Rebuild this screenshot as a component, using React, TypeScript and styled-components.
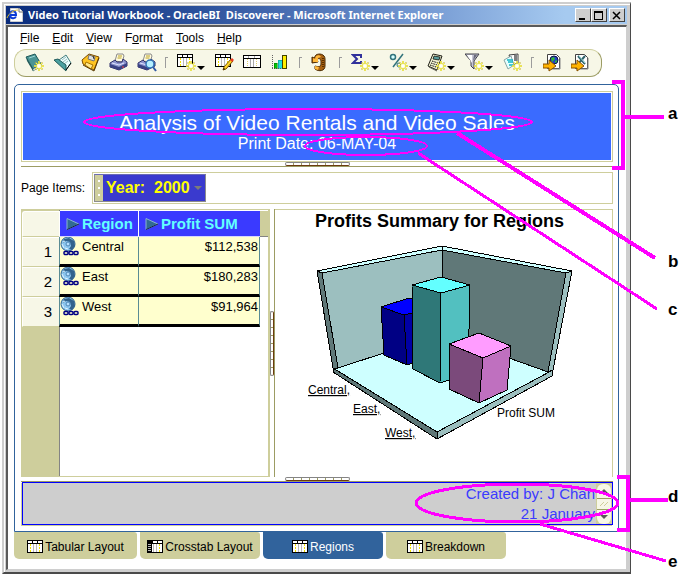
import React from "react";
import styled, { createGlobalStyle, css } from "styled-components";

const sand = "#cece9c";
const olive = "#9c9c63";
const cream = "#f7f7e7";
const steel = "#31639c";
const magenta = "#ff00ff";

const GlobalStyle = createGlobalStyle`
  *, *::before, *::after { box-sizing: border-box; }
  body { margin: 0; background: #fff; color: #000; font: 12px/16px "Liberation Sans", Arial, sans-serif; }
  button, select { font: inherit; color: inherit; margin: 0; padding: 0; border: 0; background: none; border-radius: 0; }
  svg { display: block; flex: none; }
`;

const Page = styled.div`
  position: relative;
  display: flex;
  min-height: 100vh;
  padding: 2px 59px 2px 2px;
`;

const Frame = styled.div`
  flex: 1;
  min-width: 0;
  display: flex;
  flex-direction: column;
  padding: 2px 3px 2px 2px;
  background: #cecece;
  border: 2px solid #cecece;
  border-right: 1px solid #4a4a4a;
  border-bottom: 2px solid #4a4a4a;
  box-shadow: inset 1px 1px 0 #fff;
`;

const TitleBar = styled.header`
  display: flex;
  align-items: center;
  height: 18px;
  padding-right: 2px;
  gap: 5px;
  color: #fff;
  font: bold 11px/16px "Noto Sans", "Open Sans", sans-serif;
  background: linear-gradient(to right, #0a2c7c, #2a4f9a 30%, #6a8fcc 62%, #a6caf0 90%);
`;

const Caption = styled.span`
  flex: 1;
  white-space: nowrap;
  overflow: hidden;
`;

const WindowButtons = styled.div`
  display: flex;
`;

const WindowButton = styled.button<{ $apart?: boolean }>`
  width: 16px;
  height: 14px;
  display: grid;
  place-items: center;
  background: #cecece;
  border: 1px solid;
  border-color: #fff #424242 #424242 #fff;
  margin-left: ${(p) => (p.$apart ? "2px" : "0")};
`;

const Client = styled.main`
  flex: 1;
  display: flex;
  flex-direction: column;
  margin-top: 1px;
  padding: 0 7px 10px 6px;
  background: #fff;
  border-top: 2px solid #5a5a5a;
  border-left: 2px solid #5a5a5a;
  border-right: 1px solid #cecece;
  border-bottom: 1px solid #cecece;
`;

const MenuBar = styled.nav`
  display: flex;
  align-items: center;
  gap: 13px;
  height: 22px;
  padding-left: 6px;
`;

const ToolBar = styled.div`
  align-self: flex-start;
  display: flex;
  align-items: center;
  height: 28px;
  padding: 0 2px 0 10px;
  background: ${cream};
  border: 1px solid ${sand};
  border-bottom-color: ${olive};
  border-right-color: ${olive};
  border-radius: 12px;
`;

const ToolButton = styled.button<{ $menu?: boolean }>`
  display: flex;
  align-items: center;
  width: ${(p) => (p.$menu ? "38px" : "28px")};
  height: 24px;
`;

const ToolDivider = styled.span`
  width: 12px;
  height: 11px;
  margin-bottom: 2px;
  display: flex;

  &::before {
    content: "";
    width: 3px;
    border-left: 1px solid #9c9c9c;
    border-top: 1px solid #9c9c9c;
  }
`;

const Workbook = styled.section`
  flex: 1;
  display: flex;
  flex-direction: column;
  margin-top: 7px;
  padding: 6px 5px 6px 6px;
  border: 1px solid ${steel};
  border-radius: 5px 5px 0 0;
`;

const SheetTitle = styled.header`
  padding: 1px;
  border: 1px solid ${sand};
`;

const TitleFill = styled.div`
  padding: 17px 0 7px;
  background: #3a6bff;
  color: #fff;
  text-align: center;
`;

const TitleText = styled.h1`
  margin: 0;
  font-size: 21px;
  line-height: 25px;
  font-weight: normal;
`;

const PrintDate = styled.p`
  margin: 0;
  font-size: 16px;
  line-height: 18px;
`;

const Splitter = styled.div<{ $vertical?: boolean }>`
  display: flex;
  justify-content: center;
  align-items: center;
  ${(p) =>
    p.$vertical
      ? css`
          width: 5px;
          border-right: 1px solid ${olive};
        `
      : css`
          height: 5px;
          border-bottom: 1px solid ${olive};
        `}
`;

const Grip = styled.span<{ $vertical?: boolean }>`
  flex: none;
  width: ${(p) => (p.$vertical ? "4px" : "65px")};
  height: ${(p) => (p.$vertical ? "65px" : "4px")};
  border: 1px solid #848484;
  border-radius: 2px;
  background: ${(p) =>
    `repeating-linear-gradient(${p.$vertical ? "to bottom" : "to right"}, #fff 0 7px, ${olive} 7px 8px)`};
  ${(p) => (p.$vertical ? "border-right-color: #6b3a10;" : "border-bottom-color: #6b3a10;")}
`;

const PageItems = styled.div`
  display: flex;
  align-items: center;
  gap: 6px;
  margin: 5px 0;

  label { width: 65px; white-space: nowrap; }
`;

const ItemTray = styled.div`
  flex: 1;
  display: flex;
  padding: 1px;
  border: 1px solid ${sand};
`;

const ItemChip = styled.div`
  display: flex;
  align-items: center;
  height: 28px;
  padding-right: 3px;
  background: #3a3ace;
  border: 1px solid #8c8c8c;
  border-top-color: #6b6bb5;
  font-weight: bold;
  font-size: 16px;
  color: #ffff00;
`;

const ChipHandle = styled.span`
  align-self: stretch;
  width: 8px;
  margin-right: 3px;
  background: ${sand};
  display: flex;
  flex-direction: column;
  align-items: center;
  justify-content: space-evenly;

  i { width: 2px; height: 2px; background: #fff; }
`;

const ItemSelect = styled.select`
  appearance: none;
  width: 88px;
  height: 24px;
  outline: none;
  white-space: pre;
`;

const Split = styled.div`
  flex: 1;
  display: grid;
  grid-template-columns: minmax(249px, 42%) auto 1fr;
`;

const GridPane = styled.section`
  padding: 1px 0 0 1px;
  border: 1px solid ${sand};
  border-width: 1px 2px 1px 0;
  background: linear-gradient(to right, ${sand} 38px, #848484 38px 39px, #fff 39px);
`;

const DataTable = styled.table`
  width: 100%;
  border-collapse: separate;
  border-spacing: 0;
  table-layout: fixed;
`;

const Corner = styled.td`
  width: 37px;
  background: ${cream};
  border-top: 1px solid #fff;
  border-left: 1px solid #fff;
  border-bottom: 1px solid ${sand};
  border-radius: 3px 0 0 0;
`;

const ColumnHead = styled.th<{ $narrow?: boolean }>`
  height: 26px;
  ${(p) => p.$narrow && "width: 79px;"}
  padding: 0 0 0 6px;
  background: #3a3aff;
  background-clip: padding-box;
  border-left: 1px solid #fff;
  border-bottom: 1px solid #d6d6ff;
  color: #63ffff;
  font-size: 15px;
  line-height: 18px;

  div { display: flex; align-items: center; gap: 2px; }
`;

const HeadFiller = styled.td`
  width: 8px;
  background: ${sand};
  border-bottom: 1px solid #848484;
`;

const RowHead = styled.th`
  height: 30px;
  padding: 0 7px 0 0;
  background: ${cream};
  border-top: 1px solid #fff;
  border-left: 1px solid #fff;
  border-bottom: 1px solid ${sand};
  text-align: right;
  font-weight: normal;
  font-size: 15px;
`;

const Cell = styled.td<{ $amount?: boolean }>`
  height: 30px;
  padding: 0 1px 0 0;
  vertical-align: top;
  background: #ffffce;
  border-left: 1px solid #5a8c94;
  border-bottom: 3px solid #000;
  font-size: 13px;
  line-height: 20px;
  text-align: ${(p) => (p.$amount ? "right" : "left")};
  ${(p) => p.$amount && "border-right: 1px solid #5a8c94;"}

  div { display: flex; gap: 2px; }
`;

const ChartPane = styled.section`
  display: flex;
  flex-direction: column;
  align-items: center;
  padding: 0 8px 0 0;
  border-top: 1px solid ${sand};
  border-right: 1px solid ${sand};
`;

const ChartTitle = styled.h2`
  margin: 0 0 8px;
  font-size: 18px;
  line-height: 22px;
`;

const ChartDrawing = styled.svg`
  font: 12px "Liberation Sans", Arial, sans-serif;

  polygon { stroke: #000; stroke-width: 1px; stroke-linejoin: round; }
  a { fill: #000; text-decoration: underline; }
`;

const SheetFooter = styled.footer`
  display: flex;
  justify-content: flex-end;
  height: 43px;
  background: #cecece;
  border: 1px solid #0000ff;
  margin: 0 0 0 1px;
  box-shadow: -1px 1px 0 ${sand};
  color: #3a3aff;
  font-size: 15px;
  line-height: 20px;
  text-align: right;
  white-space: nowrap;
  overflow: hidden;
`;

const FooterText = styled.div`
  padding: 1px 1px 0 0;
`;

const ScrollBar = styled.div`
  display: flex;
  flex-direction: column;
  width: 16px;
  padding: 1px 1px 0;
  background: ${sand};
`;

const ScrollButton = styled.button<{ $down?: boolean }>`
  display: grid;
  place-items: center;
  height: 14px;
  background: ${cream};
  border-radius: ${(p) => (p.$down ? "0 0 6px 6px" : "6px 6px 0 0")};
`;

const ScrollThumb = styled.span`
  display: grid;
  place-items: center;
  height: 12px;
  background: ${cream};
  border-top: 1px solid ${olive};
  border-bottom: 1px solid ${olive};
`;

const Tabs = styled.div`
  display: flex;
  gap: 3px;
`;

const Tab = styled.button<{ $active?: boolean; $wide?: boolean }>`
  display: flex;
  align-items: center;
  justify-content: center;
  gap: 2px;
  width: ${(p) => (p.$wide ? "123px" : "120px")};
  height: 27px;
  padding-top: 2px;
  background: ${(p) => (p.$active ? steel : sand)};
  color: ${(p) => (p.$active ? "#fff" : "#000")};
  border-radius: 0 3px 5px 5px;
  white-space: nowrap;
`;

const Callouts = styled.svg`
  position: absolute;
  inset: 0;
  width: 100%;
  height: 100%;
  pointer-events: none;
  font: bold 17px "Liberation Sans", Arial, sans-serif;
`;

/* Icons */

const Star = () => (
  <g>
    <path d="M14 8v10M9 13h10M10.500 9.500l7 7M17.500 9.500l-7 7" stroke="#c9b93a" strokeWidth="1.500" />
    <path d="M14 8v10M9 13h10M11 10l6 6M17 10l-6 6" stroke="#ffff4a" strokeWidth="1" />
    <circle cx="14" cy="13" r="2" fill="#fff" />
  </g>
);

const Sheet = ({ crosstab }: { crosstab?: boolean }) => (
  <g shapeRendering="crispEdges">
    <rect x="0.500" y="0.500" width="15" height="12" fill="#fff" stroke="#000" />
    <path d="M0 3.500h16" stroke="#000" />
    <path d="M5.500 1v2M10.500 1v2" stroke="#000" />
    <path d="M3.500 4v8M12.500 4v8" stroke="#f0e000" strokeDasharray="2 1" />
    <path d="M6.500 4v8M9.500 4v8" stroke="#b8b8b8" />
    {crosstab && <path d="M0 0h5v13H0z" fill="#000" />}
    {crosstab && <path d="M1 4.500h3M1 6.500h3M1 8.500h3M1 10.500h3" stroke="#bbb" />}
  </g>
);

const Printer = () => (
  <g>
    <path d="M6 8L8 1h6l1 2-2 6z" fill="#fffbe0" stroke="#8a8a8a" />
    <path d="M9 3h4M8.500 5h4" stroke="#b8a020" />
    <path d="M1 10l5-3 2 2h5l1-3 4 3v4l-8 4-9-3z" fill="#8c94ce" stroke="#31316b" />
    <path d="M1 11l9 3 8-4v3l-8 4-9-3z" fill="#3a4284" />
    <path d="M3 10l7 2 5-2" stroke="#e0e4ff" fill="none" />
    <path d="M13 14h2" stroke="#ff4040" />
  </g>
);

const Arrow = () => (
  <path d="M0 11h6V7l7 6-7 5v-3H0z" fill="#ffb300" stroke="#8a5200" />
);

const glyphs: Record<string, React.ReactNode> = {
  newBook: (
    <g>
      <path d="M1 4l9-3 6 10-8 5z" fill="#4a9494" stroke="#215a5a" />
      <path d="M1 4l7 12v2L2 8z" fill="#215a5a" />
      <path d="M8 16l8-5v2l-8 5z" fill="#fff" stroke="#215a5a" strokeWidth="0.600" />
      <path d="M4 5l6-2" stroke="#9cd6d6" />
      <Star />
    </g>
  ),
  openBook: (
    <g>
      <path d="M6 7l7-5 5 8-5 7z" fill="#eaffff" stroke="#427b7b" />
      <path d="M9 7l4-3M10 9l4-3M11 11l4-3" stroke="#9cbcbc" />
      <path d="M1 7l4-1 8 6v6z" fill="#4aa0a0" stroke="#215a5a" />
      <path d="M13 17l5-7" stroke="#000" />
    </g>
  ),
  save: (
    <g>
      <path d="M1 7L8 1l10 3-5 13-11-6z" fill="#ffc421" stroke="#7b4a00" />
      <path d="M8 2l6 2-1 4-6-2z" fill="#dedede" stroke="#737373" />
      <path d="M12 3l1 3" stroke="#333" />
      <path d="M5 9l7 3-2 4-6-4z" fill="#ffe78c" stroke="#a87400" />
      <path d="M2 12l11 6 5-13" fill="none" stroke="#5a3a00" />
    </g>
  ),
  print: <Printer />,
  preview: (
    <g>
      <Printer />
      <circle cx="13" cy="11" r="4" fill="#b5f0ff" stroke="#3173b5" strokeWidth="1.500" />
      <path d="M16 14l3 4" stroke="#315aa5" strokeWidth="2" />
    </g>
  ),
  newSheet: (
    <g>
      <g transform="translate(0 1)"><Sheet /></g>
      <Star />
    </g>
  ),
  editSheet: (
    <g>
      <g transform="translate(0 1)"><Sheet /></g>
      <path d="M8 17l1-3 7-8 2 2-7 8z" fill="#ffd629" stroke="#7b5200" />
      <path d="M15 7l2-2 2 2-2 2z" fill="#e83a21" />
      <path d="M8 17l1-2 1 1z" fill="#000" />
    </g>
  ),
  sheet: (
    <g shapeRendering="crispEdges">
      <rect x="0.500" y="2.500" width="17" height="12" fill="#fff" stroke="#000" />
      <path d="M0 5.500h18" stroke="#000" />
      <path d="M4.500 6v8M13.500 6v8" stroke="#e0d070" strokeDasharray="1 1" />
      <path d="M7.500 6v8M10.500 6v8M5.500 3v2M11.500 3v2" stroke="#a8a8a8" />
    </g>
  ),
  chart: (
    <g shapeRendering="crispEdges">
      <path d="M1.500 2v14M1 15.500h16" stroke="#636363" strokeDasharray="1 1" />
      <rect x="3" y="10" width="3" height="5" fill="#00c600" stroke="#006300" strokeWidth="0.500" />
      <rect x="7" y="7" width="4" height="8" fill="#21dede" stroke="#008484" strokeWidth="0.500" />
      <rect x="11.500" y="2.500" width="4" height="13" fill="#ffef00" stroke="#424200" />
    </g>
  ),
  refresh: (
    <g>
      <path d="M5 2c3-2 9-1 9 4v7c0 5-6 6-10 3v-3c3 1 6 1 6-2V8c0-2-2-3-4-2l1 3-6 1V4l2 1z" fill="#a86010" stroke="#4a2900" />
      <path d="M5 3c2-1 4-1 5 1L7 5l0 4-5 0V5l2 1zM4 13l4 1-1 3-3-1z" fill="#ffb83a" />
      <path d="M12 5v10" stroke="#5a3000" strokeDasharray="1 1" strokeWidth="2" />
    </g>
  ),
  sigma: (
    <g>
      <path d="M10 5V2H2l4 4-4 4h8V8" fill="none" stroke="#31319c" strokeWidth="2" />
      <Star />
    </g>
  ),
  percent: (
    <g>
      <circle cx="4" cy="4" r="2.500" fill="#d6ffff" stroke="#31737b" strokeWidth="1.500" />
      <path d="M14 1L4 14" stroke="#31737b" strokeWidth="1.500" />
      <circle cx="10" cy="12" r="2" fill="none" stroke="#31737b" />
      <Star />
    </g>
  ),
  calculator: (
    <g>
      <path d="M6 1l9 2-5 14-9-4z" fill="#f0f0d0" stroke="#21211a" />
      <path d="M7 3l6 1-1 3-6-1z" fill="#5a9c9c" stroke="#000" strokeWidth="0.700" />
      <path d="M5 8l6 2M4 10l6 2M3 12l6 2" stroke="#000" strokeDasharray="1.500 1" />
      <path d="M2 14l8 4" stroke="#5a5a4a" />
      <Star />
    </g>
  ),
  filter: (
    <g>
      <path d="M0 1h14L9 8v8l-3-3V8z" fill="#c6c6d6" stroke="#42424a" />
      <path d="M2 2h5v8z" fill="#fff" />
      <path d="M9 2h3L8 8z" fill="#6b6b7b" />
      <Star />
    </g>
  ),
  condition: (
    <g>
      <path d="M6 2l9-1v9l-6 2z" fill="#fff" stroke="#424242" />
      <path d="M11 3h3M11 5h3M11 7h3" stroke="#000" />
      <path d="M1 7l7-4 3 9-6 4z" fill="#e4ffff" stroke="#8ca5a5" />
      <path d="M4 7h6M5 9h5M6 12h4" stroke="#10b5c6" strokeWidth="1.500" />
      <Star />
    </g>
  ),
  toWeb: (
    <g>
      <path d="M4.500 1.500h9l3 3v11h-12z" fill="#fff" stroke="#424242" />
      <path d="M17 5v11H5" stroke="#848484" fill="none" />
      <circle cx="11" cy="7" r="4" fill="#2142c6" stroke="#101042" />
      <path d="M8 5l3-1 1 2-3 3zM12 8l2-1v2l-2 1z" fill="#31b53a" />
      <Arrow />
    </g>
  ),
  toExcel: (
    <g>
      <path d="M4.500 1.500h9l3 3v11h-12z" fill="#fff" stroke="#424242" />
      <path d="M17 5v11H5" stroke="#848484" fill="none" />
      <path d="M7 3l7 8M14 3l-7 8" stroke="#31636b" strokeWidth="2" />
      <path d="M8 3l6 7" stroke="#9ce0e0" />
      <Arrow />
    </g>
  ),
};

const ToolGlyph = ({ name }: { name: string }) => (
  <svg width="20" height="20" viewBox="0 0 20 20" fill="none" aria-hidden="true">
    {glyphs[name]}
  </svg>
);

const Caret = ({ color = "#000" }: { color?: string }) => (
  <svg width="8" height="4" viewBox="0 0 8 4" aria-hidden="true">
    <path d="M0 0h8L4 4z" fill={color} />
  </svg>
);

const SortMark = () => (
  <svg width="14" height="12" viewBox="0 0 14 12" aria-hidden="true">
    <path d="M1 0.500L13 6 1 11.500z" fill="#316b94" stroke="#8cb5ce" />
    <path d="M1 11.500L13 6" stroke="#102142" />
  </svg>
);

const DrillIcon = () => (
  <svg width="20" height="20" viewBox="0 0 20 20" fill="none" aria-hidden="true">
    <circle cx="8" cy="7" r="7" fill="#8cc6ef" stroke="#31638c" />
    <path d="M4 2l5-1 5 3 1 5-3 4-3-1 2-3-1-4-4-1-3 2z" fill="#31638c" />
    <circle cx="8" cy="7" r="2" fill="#b5e0ff" stroke="#4a84b5" />
    <path d="M2 7l2 4M3 5l2-1M5 11l3 1" stroke="#e0f4ff" />
    <g stroke="#000084" strokeWidth="1.500" fill="#ffffce">
      <rect x="4" y="14.500" width="4" height="3" rx="1" />
      <rect x="9" y="14.500" width="4" height="3" rx="1" />
      <rect x="14" y="14.500" width="4" height="3" rx="1" />
    </g>
  </svg>
);

const BrowserIcon = () => (
  <svg width="17" height="18" viewBox="0 0 17 18" fill="none" aria-hidden="true">
    <path d="M4.500 2.500h9l3 3v10h-12z" fill="#fff" stroke="#cecece" />
    <path d="M13 2v4h4" stroke="#737373" />
    <path d="M4 9h6c0-5-6-5-6 0 0 4 5 4 6 1.500" stroke="#0a3ad6" strokeWidth="2" />
    <path d="M1 12C3 7 8 4 12 4" stroke="#e0c030" />
  </svg>
);

const menus: [string, string, string][] = [
  ["", "F", "ile"],
  ["", "E", "dit"],
  ["", "V", "iew"],
  ["F", "o", "rmat"],
  ["", "T", "ools"],
  ["", "H", "elp"],
];

type Tool = { icon: string; label: string; menu?: boolean } | null;

const tools: Tool[] = [
  { icon: "newBook", label: "New workbook" },
  { icon: "openBook", label: "Open workbook" },
  { icon: "save", label: "Save" },
  { icon: "print", label: "Print" },
  { icon: "preview", label: "Print preview" },
  null,
  { icon: "newSheet", label: "New worksheet", menu: true },
  { icon: "editSheet", label: "Edit worksheet" },
  { icon: "sheet", label: "Show table" },
  { icon: "chart", label: "Show graph" },
  null,
  { icon: "refresh", label: "Refresh" },
  null,
  { icon: "sigma", label: "New total", menu: true },
  { icon: "percent", label: "New percentage", menu: true },
  { icon: "calculator", label: "New calculation", menu: true },
  { icon: "filter", label: "New condition", menu: true },
  { icon: "condition", label: "New parameter" },
  null,
  { icon: "toWeb", label: "Export to HTML" },
  { icon: "toExcel", label: "Export to Excel" },
];

const rows = [
  ["Central", "$112,538"],
  ["East", "$180,283"],
  ["West", "$91,964"],
];

const tabs = [
  { label: "Tabular Layout", wide: true },
  { label: "Crosstab Layout", crosstab: true },
  { label: "Regions", active: true },
  { label: "Breakdown" },
];

const ProfitChart = () => (
  <ChartDrawing width="280" height="205" viewBox="300 240 280 205" role="img" aria-label="Profits by region">
    <g shapeRendering="crispEdges">
      <polygon points="322,273 442,250 442,334 338,368" fill="#9cbfbf" />
      <polygon points="442,250 566,273 548,372 442,334" fill="#607878" />
      <polygon points="333,368 338,368 442,334 548,372 553,370 437,432" fill="#ceffff" />
      <polygon points="317,271 442,246 442,250 322,273" fill="#ceffff" />
      <polygon points="442,246 572,271 566,273 442,250" fill="#ceffff" />
      <polygon points="317,271 322,273 338,368 333,368" fill="#607878" />
      <polygon points="572,271 553,370 548,372 566,273" fill="#9cbfbf" />
      <polygon points="333,368 437,432 437,439 333,372" fill="#607878" />
      <polygon points="437,432 553,370 552,376 437,439" fill="#9cbfbf" />

      <polygon points="381,307 409,298 440,306 404,315" fill="#0000ff" />
      <polygon points="381,307 404,315 407,365 384,355" fill="#000084" />
      <polygon points="404,315 440,306 438,355 407,365" fill="#0000a5" />

      <polygon points="412,285 441,277 470,285 441,293" fill="#63ffff" />
      <polygon points="412,285 441,293 440,383 413,369" fill="#2f7878" />
      <polygon points="441,293 470,285 468,374 440,383" fill="#52c0c0" />

      <polygon points="449,344 479,333 511,346 483,358" fill="#ff9cff" />
      <polygon points="449,344 483,358 479,403 449,389" fill="#7b4a7b" />
      <polygon points="483,358 511,346 507,390 479,403" fill="#bf70bf" />
    </g>
    <a href="#central"><text x="308" y="394">Central,</text></a>
    <a href="#east"><text x="353" y="413">East,</text></a>
    <a href="#west"><text x="385" y="437">West,</text></a>
    <text x="497" y="417">Profit SUM</text>
  </ChartDrawing>
);

const CalloutLayer = () => (
  <Callouts viewBox="0 0 690 576" preserveAspectRatio="xMidYMin meet">
    <g fill="none" stroke={magenta} strokeWidth="4" shapeRendering="crispEdges">
      <path d="M612 82h11v86h-11M624 117h40" />
      <path d="M617 477h11v53h-11M630 500h38" />
      <path d="M457 133L655 258" />
      <path d="M540 524L666 561" strokeWidth="3" />
      <path d="M418 153L657 309" strokeWidth="3" />
      <ellipse cx="308" cy="122" rx="224" ry="13" strokeWidth="2" />
      <ellipse cx="366" cy="146" rx="61" ry="9" strokeWidth="2" />
      <ellipse cx="517" cy="503" rx="101" ry="19" strokeWidth="3" />
    </g>
    <text x="668" y="119">a</text>
    <text x="668" y="267">b</text>
    <text x="668" y="315">c</text>
    <text x="668" y="502">d</text>
    <text x="668" y="567">e</text>
  </Callouts>
);

export default function App() {
  return (
    <Page>
      <GlobalStyle />
      <Frame>
        <TitleBar>
          <BrowserIcon />
          <Caption>{"Video Tutorial Workbook - OracleBI\u00a0 Discoverer - Microsoft Internet Explorer"}</Caption>
          <WindowButtons>
            <WindowButton aria-label="Minimize">
              <svg width="10" height="9" viewBox="0 0 10 9"><path d="M1 7h6v2H1z" fill="#000" /></svg>
            </WindowButton>
            <WindowButton aria-label="Maximize">
              <svg width="10" height="9" viewBox="0 0 10 9" shapeRendering="crispEdges">
                <path d="M0.500 0.500h8v8h-8zM0 1.500h9" fill="none" stroke="#000" />
              </svg>
            </WindowButton>
            <WindowButton $apart aria-label="Close">
              <svg width="10" height="9" viewBox="0 0 10 9">
                <path d="M1 1l7 7M8 1L1 8" stroke="#000" strokeWidth="1.500" />
              </svg>
            </WindowButton>
          </WindowButtons>
        </TitleBar>

        <Client>
          <MenuBar>
            {menus.map(([before, key, after]) => (
              <button key={before + key + after}>{before}<u>{key}</u>{after}</button>
            ))}
          </MenuBar>

          <ToolBar role="toolbar">
            {tools.map((tool, i) =>
              tool ? (
                <ToolButton key={i} $menu={tool.menu} aria-label={tool.label}>
                  <ToolGlyph name={tool.icon} />
                  {tool.menu && (
                    <svg width="8" height="16" viewBox="0 0 8 16" aria-hidden="true">
                      <path d="M0 11h8L4 15z" fill="#000" />
                    </svg>
                  )}
                </ToolButton>
              ) : (
                <ToolDivider key={i} />
              )
            )}
          </ToolBar>

          <Workbook>
            <SheetTitle>
              <TitleFill>
                <TitleText>Analysis of Video Rentals and Video Sales</TitleText>
                <PrintDate>Print Date: 06-MAY-04</PrintDate>
              </TitleFill>
            </SheetTitle>
            <Splitter><Grip /></Splitter>

            <PageItems>
              <label htmlFor="page-item">Page Items:</label>
              <ItemTray>
                <ItemChip>
                  <ChipHandle><i /><i /><i /></ChipHandle>
                  <ItemSelect id="page-item">
                    <option>{"Year:\u00a0 2000"}</option>
                  </ItemSelect>
                  <Caret color="#7b7b7b" />
                </ItemChip>
              </ItemTray>
            </PageItems>

            <Split>
              <GridPane>
                <DataTable>
                  <thead>
                    <tr>
                      <Corner />
                      <ColumnHead $narrow scope="col"><div><SortMark />Region</div></ColumnHead>
                      <ColumnHead scope="col"><div><SortMark />Profit SUM</div></ColumnHead>
                      <HeadFiller />
                    </tr>
                  </thead>
                  <tbody>
                    {rows.map(([region, profit], i) => (
                      <tr key={region}>
                        <RowHead scope="row">{i + 1}</RowHead>
                        <Cell><div><DrillIcon />{region}</div></Cell>
                        <Cell $amount>{profit}</Cell>
                      </tr>
                    ))}
                  </tbody>
                </DataTable>
              </GridPane>
              <Splitter $vertical><Grip $vertical /></Splitter>
              <ChartPane>
                <ChartTitle>Profits Summary for Regions</ChartTitle>
                <ProfitChart />
              </ChartPane>
            </Split>

            <Splitter><Grip /></Splitter>
            <SheetFooter>
              <FooterText>
                <div>Created by: J Chan</div>
                <div>21 January</div>
              </FooterText>
              <ScrollBar>
                <ScrollButton aria-label="Scroll up">
                  <svg width="8" height="4" viewBox="0 0 8 4"><path d="M0 4h8L4 0z" fill="#5a5a5a" /></svg>
                </ScrollButton>
                <ScrollThumb>
                  <svg width="8" height="6" viewBox="0 0 8 6"><path d="M0 5l4-4M4 5l4-4" stroke={sand} /></svg>
                </ScrollThumb>
                <ScrollButton $down aria-label="Scroll down"><Caret color="#5a5a5a" /></ScrollButton>
              </ScrollBar>
            </SheetFooter>
          </Workbook>

          <Tabs role="tablist">
            {tabs.map((tab) => (
              <Tab key={tab.label} role="tab" aria-selected={!!tab.active} $active={tab.active} $wide={tab.wide}>
                <svg width="16" height="13" viewBox="0 0 16 13" fill="none" aria-hidden="true">
                  <Sheet crosstab={tab.crosstab} />
                </svg>
                {tab.label}
              </Tab>
            ))}
          </Tabs>
        </Client>
      </Frame>
      <CalloutLayer />
    </Page>
  );
}
